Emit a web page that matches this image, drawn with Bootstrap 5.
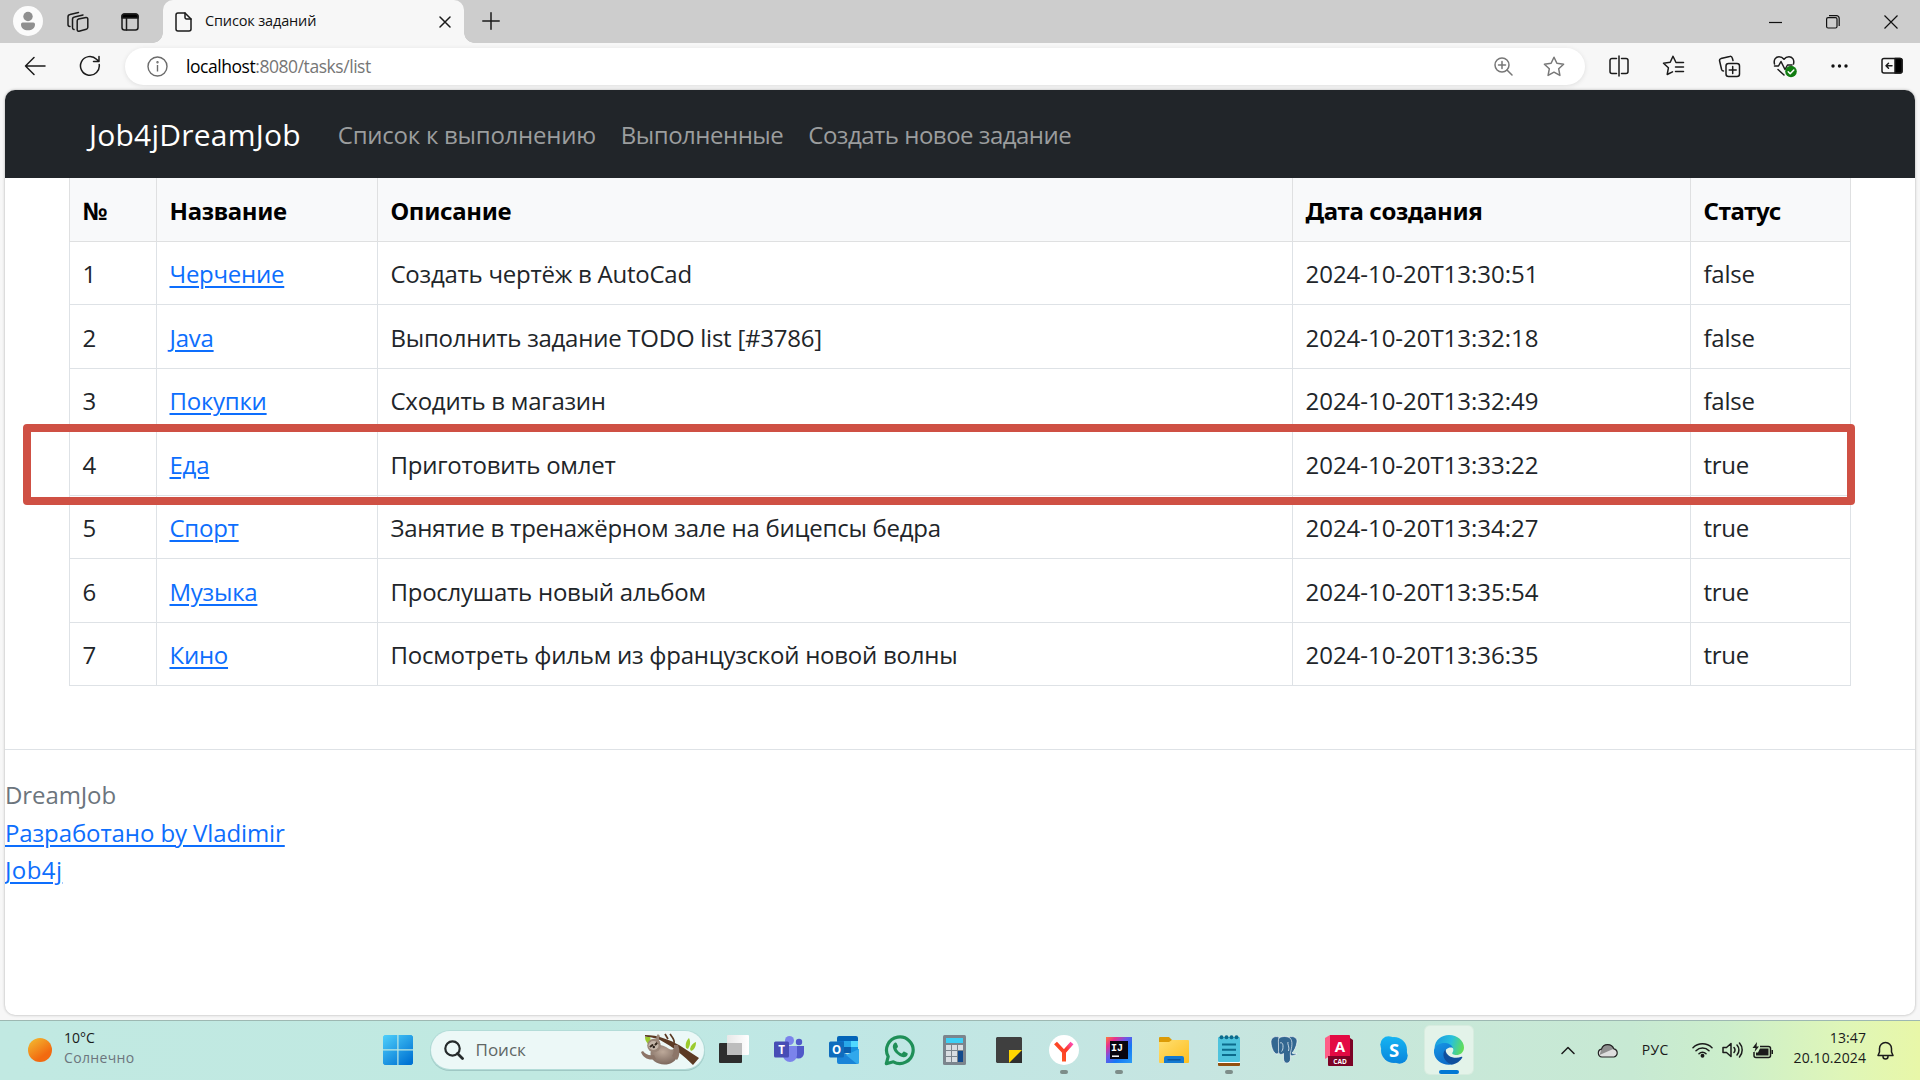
<!DOCTYPE html>
<html lang="ru">
<head>
<meta charset="utf-8">
<meta name="viewport" content="width=device-width, initial-scale=1">
<title>Список заданий</title>
<link href="https://cdn.jsdelivr.net/npm/bootstrap@5.3.0/dist/css/bootstrap.min.css" rel="stylesheet">
<script src="https://cdn.jsdelivr.net/npm/bootstrap@5.3.0/dist/js/bootstrap.bundle.min.js"></script>
<style>
  body { font-family: "Open Sans", "Noto Sans", sans-serif; background: #f7f7f7; color: #212529; }
  svg { display: block; flex: none; }
  .line-icon { fill: none; stroke: #1b1b1b; stroke-width: 1.5; stroke-linecap: round; stroke-linejoin: round; }

  /* browser title bar */
  .title-bar { height: 43px; background: #cdcdcd; padding-left: 13px; }
  .profile-icon { margin-top: -1px; }
  .panel-icon { margin-left: 32px; }
  .browser-tab { width: 301px; background: #f7f7f7; border-radius: 10px 10px 0 0; padding: 0 13px 0 12px; margin-left: 24px; position: relative; }
  .browser-tab::before, .browser-tab::after { content: ""; position: absolute; bottom: 0; width: 10px; height: 10px; }
  .browser-tab::before { left: -10px; background: radial-gradient(circle at 0 0, #cdcdcd 9.5px, #f7f7f7 10px); }
  .browser-tab::after { right: -10px; background: radial-gradient(circle at 100% 0, #cdcdcd 9.5px, #f7f7f7 10px); }
  .tab-title { font-size: 14.5px; letter-spacing: -.15px; color: #111; line-height: 20px; margin-left: 13px; padding-bottom: 1px; }
  .plus-icon { margin: -1px 0 0 18px; }
  .window-keys { gap: 44px; padding-right: 22px; }

  /* address row */
  .address-row { height: 47px; background: #f7f7f7; padding: 0 17px 1px 24px; }
  .reload-icon { margin-left: 33px; }
  .address-pill { width: 1460px; height: 37px; margin-left: 24px; padding: 0 20px 0 22px; background: #fff; border-radius: 19px; box-shadow: 0 1px 5px rgba(0,0,0,.1); }
  .address-text { font-size: 17.5px; letter-spacing: -.45px; color: #767676; margin-left: 18px; line-height: 24px; }
  .zoom-icon, .fav-icon { stroke: #777; }
  .fav-icon { margin-left: 30px; }
  .tool-set { gap: 32px; }

  /* page viewport */
  .page-view { height: 925px; margin: 0 5px; background: #fff; border-radius: 10px; overflow: hidden; box-shadow: 0 0 3px rgba(0,0,0,.3); position: relative; font-size: 24px; line-height: 37.5px; letter-spacing: -.25px; }
  .site-nav { height: 88px; padding: 2px 0 0 84px; }
  .site-nav .navbar-brand { font-size: 30px; letter-spacing: .22px; margin-right: 37px; padding: 0 0 1px; line-height: 46px; }
  .site-nav .nav-link { color: #9b9d9e; padding: 0 !important; letter-spacing: -.25px; margin-right: 25px; }
  .site-nav .nav-item + .nav-item .nav-link { letter-spacing: -.5px; }
  .task-table { width: 1782px; margin: -.6px 0 0 64px; table-layout: fixed; border-color: #dee2e6; --bs-table-color: #212529; }
  .task-table > :not(caption) > * > * { padding: 13.5px 12.5px 11.5px; height: 63.5px; vertical-align: middle; }
  .task-table thead th { font-family: "Noto Sans", sans-serif; font-weight: 700; letter-spacing: -.3px; color: #000; }
  .task-table td:nth-child(4) { letter-spacing: -.03px; }
  .task-table a, .site-footer a { color: #0d6efd; text-decoration-thickness: 2px; text-underline-offset: 3px; }
  .highlight-frame { position: absolute; left: 18px; top: 333.5px; width: 1832px; height: 81px; border: 8px solid #cf5044; border-radius: 4px; }
  .site-footer { margin-top: 62.6px; border-top: 1px solid #dee2e6; padding-top: 26px; letter-spacing: -.1px; }
  .site-footer span { color: #6c757d; }
  .site-footer a:last-child { letter-spacing: .4px; }

  /* taskbar */
  .task-bar { height: 60px; margin-top: 5px; border-top: 1px solid #9db8b2; padding: 0 0 1px 28px; font-size: 14px; line-height: 20px; color: #1a1a1a;
    background: linear-gradient(90deg, #c1e9e2 0, #c0e9e1 28%, #bfe7e5 43%, #c6e5e1 62%, #c8e8d8 76%, #c7e9d3 85%, #cceecb 90%, #dff6b8 96%, #e8f7a8 100%); }
  .weather { width: 354.5px; gap: 12px; }
  .weather-note { letter-spacing: .35px; }
  .search-pill { width: 273px; height: 38px; margin: 0 3px 0 18px; border-radius: 19px; background: #ecf8f7; box-shadow: 0 0 0 1px #b3dcd8, 0 1px 0 1px #9fc8c4; padding: 0 4px 0 13px; font-size: 17px; color: #5f6665; }
  .search-label { margin-left: 12px; }
  .app-slot { width: 55px; height: 48px; position: relative; }
  .app-slot.running::after { content: ""; position: absolute; bottom: 0; left: 23.5px; width: 8px; height: 4px; border-radius: 2px; background: #7d8d89; }
  .app-slot.current { width: 48px; margin-left: 3.5px; background: #e3f3e9; border-radius: 5px; box-shadow: 0 0 0 1px #d7ecdf; }
  .app-slot.current::after { left: 14px; width: 20px; background: #0078d4; }
  .tray { padding-right: 26px; }
  .cloud-icon { margin-left: 22px; }
  .lang-code { margin-left: 23px; letter-spacing: .3px; }
  .wifi-icon { margin-left: 23px; }
  .sound-icon, .power-icon { margin-left: 9px; }
  .clock { letter-spacing: .1px; margin: 0 11px 0 20px; }
</style>
</head>
<body class="vh-100 overflow-hidden d-flex flex-column">

<header>
  <div class="title-bar d-flex align-items-center">
    <svg class="profile-icon" width="30" height="30" viewBox="0 0 30 30"><circle cx="15" cy="15" r="15" fill="#fbfbfb"/><circle cx="15" cy="10.500" r="4.700" fill="#8f8f8f"/><path d="M8 18.200a1.700 1.700 0 0 1 1.700-1.700h10.600a1.700 1.700 0 0 1 1.700 1.700c0 4.200-3 6-7 6s-7-1.800-7-6z" fill="#8f8f8f"/></svg>
    <svg class="line-icon ms-4" width="22" height="22" viewBox="0 0 22 22" stroke-width="1.300"><path d="M11.500 8l7.500-1.500a1.500 1.500 0 0 1 1.800 1.500v8.500a2 2 0 0 1-1.500 1.800L12 20.200a1.500 1.500 0 0 1-1.800-1.500V9.800A2 2 0 0 1 11.500 8zM7 18.500a2 2 0 0 1-1.500-2.200V8.500a2.500 2.500 0 0 1 2-2.500L16 4M3 15.500a2 2 0 0 1-2-2V6a2.500 2.500 0 0 1 2-2.500L11.500 1.500"/></svg>
    <svg class="line-icon panel-icon" width="18" height="18" viewBox="0 0 18 18"><rect x="1" y="1" width="16" height="16" rx="2.500"/><path d="M1 5V3.500A2.500 2.500 0 0 1 3.500 1h11A2.500 2.500 0 0 1 17 3.500V5z" fill="#000"/><path d="M5.500 5v12"/></svg>
    <div class="browser-tab d-flex align-items-center h-100">
      <svg class="line-icon" width="17" height="20" viewBox="0 0 17 20"><path d="M3 1h7l6 6v10a2 2 0 0 1-2 2H3a2 2 0 0 1-2-2V3a2 2 0 0 1 2-2z"/><path d="M10 1v4.500A1.500 1.500 0 0 0 11.500 7H16"/></svg>
      <span class="tab-title">Список заданий</span>
      <svg class="line-icon ms-auto" width="12" height="12" viewBox="0 0 12 12"><path d="M1 1l10 10M11 1L1 11"/></svg>
    </div>
    <svg class="line-icon plus-icon" width="18" height="18" viewBox="0 0 18 18"><path d="M9 .8v16.400M.8 9h16.400"/></svg>
    <div class="window-keys d-flex align-items-center flex-grow-1 justify-content-end">
      <svg width="13" height="14"><path d="M0 7.500h13" stroke="#111" stroke-width="1.200"/></svg>
      <svg width="14" height="14" fill="none" stroke="#111" stroke-width="1.200"><rect x=".6" y="2.600" width="10.400" height="10.400" rx="1.500"/><path d="M3 .7h7.500a2.700 2.700 0 0 1 2.700 2.700V11"/></svg>
      <svg width="14" height="14" stroke="#111" stroke-width="1.200"><path d="M.5.5l13 13M13.500.5l-13 13"/></svg>
    </div>
  </div>

  <div class="address-row d-flex align-items-center">
    <svg class="line-icon" width="22" height="20" viewBox="0 0 22 20"><path d="M21 10H1.500M10 1.500L1.500 10l8.500 8.500"/></svg>
    <svg class="line-icon reload-icon" width="22" height="22" viewBox="0 0 22 22"><path d="M20.200 9.500A9.400 9.400 0 1 1 17.500 4.200L19.500 6M20 1.500V6.500h-5.500"/></svg>
    <div class="address-pill d-flex align-items-center">
      <svg width="21" height="21" viewBox="0 0 21 21" fill="none" stroke="#6b6b6b" stroke-width="1.400"><circle cx="10.500" cy="10.500" r="9.500"/><path d="M10.500 9v6.500"/><circle cx="10.500" cy="6.300" r=".5"/></svg>
      <span class="address-text"><span class="text-black">localhost</span>:8080/tasks/list</span>
      <svg class="line-icon zoom-icon ms-auto" width="19" height="19" viewBox="0 0 19 19"><circle cx="8" cy="8" r="7"/><path d="M13 13l5 5M8 4.500v7M4.500 8h7"/></svg>
      <svg class="line-icon fav-icon" width="22" height="21" viewBox="0 0 22 21"><path d="M11 1.200l2.900 6.100 6.700.9-4.900 4.600 1.200 6.600L11 16.200l-5.900 3.200 1.200-6.600L1.400 8.200l6.700-.9z"/></svg>
    </div>
    <div class="tool-set d-flex align-items-center ms-auto">
      <svg class="line-icon" width="22" height="22" viewBox="0 0 22 22"><path d="M8.500 3.500H4a2 2 0 0 0-2 2v11a2 2 0 0 0 2 2h4.500M13.500 3.500H18a2 2 0 0 1 2 2v11a2 2 0 0 1-2 2h-4.500M11 1v20"/></svg>
      <svg class="line-icon" width="24" height="22" viewBox="0 0 24 22"><path d="M14 7.500L11 1.200 8.200 7.300l-6.700.9 4.900 4.600-1.200 6.700 5.300-2.700M15 7.500h6.500M13.500 12h8M13.500 16.500h8"/></svg>
      <svg class="line-icon" width="23" height="23" viewBox="0 0 23 23"><rect x="8" y="8.500" width="13.500" height="13" rx="2.500"/><path d="M14.700 11.500v7M11.200 15h7M15 5.500l-.8-2.700A2 2 0 0 0 11.700 1.400L3 3.600A2 2 0 0 0 1.600 6l2 8.500c.3 1 .9 1.600 1.900 1.600"/></svg>
      <svg class="line-icon" width="24" height="23" viewBox="0 0 24 23"><path d="M1.500 9C.3 4.500 3 1.700 6 1.700c2 0 3.600.8 5 2.600 1.400-1.800 3-2.600 5-2.600 3 0 5.700 2.800 4.500 7.300M1.500 11h4L8 6.500l4 8L14.500 10H19M5 14.500l6 5.500"/><circle cx="18" cy="16.500" r="5.800" fill="#107c10" stroke="none"/><path d="M15.200 16.800l2 2 3.600-3.800" stroke="#fff"/></svg>
      <svg width="20" height="6" fill="#111"><circle cx="4" cy="3" r="1.700"/><circle cx="10.500" cy="3" r="1.700"/><circle cx="17" cy="3" r="1.700"/></svg>
      <svg class="line-icon" width="22" height="18" viewBox="0 0 22 18"><rect x="1" y="1.500" width="20" height="14.500" rx="2"/><path d="M14 1.500h5a2 2 0 0 1 2 2v10.500a2 2 0 0 1-2 2h-5z" fill="#000"/><path d="M11 8.800H5M7.500 6.300L5 8.800l2.500 2.500"/></svg>
    </div>
  </div>
</header>

<main class="page-view">
  <nav class="site-nav navbar navbar-expand navbar-dark bg-dark">
    <a class="navbar-brand" href="#">Job4jDreamJob</a>
    <ul class="navbar-nav">
      <li class="nav-item"><a class="nav-link" href="#">Список к выполнению</a></li>
      <li class="nav-item"><a class="nav-link" href="#">Выполненные</a></li>
      <li class="nav-item"><a class="nav-link" href="#">Создать новое задание</a></li>
    </ul>
  </nav>

  <table class="task-table table table-bordered">
    <colgroup><col style="width:87px"><col style="width:221px"><col style="width:915px"><col style="width:398px"><col style="width:160px"></colgroup>
    <thead class="table-light"><tr><th>№</th><th>Название</th><th>Описание</th><th>Дата создания</th><th>Статус</th></tr></thead>
    <tbody>
      <tr><td>1</td><td><a href="#">Черчение</a></td><td>Создать чертёж в AutoCad</td><td>2024-10-20T13:30:51</td><td>false</td></tr>
      <tr><td>2</td><td><a href="#">Java</a></td><td>Выполнить задание TODO list [#3786]</td><td>2024-10-20T13:32:18</td><td>false</td></tr>
      <tr><td>3</td><td><a href="#">Покупки</a></td><td>Сходить в магазин</td><td>2024-10-20T13:32:49</td><td>false</td></tr>
      <tr><td>4</td><td><a href="#">Еда</a></td><td>Приготовить омлет</td><td>2024-10-20T13:33:22</td><td>true</td></tr>
      <tr><td>5</td><td><a href="#">Спорт</a></td><td>Занятие в тренажёрном зале на бицепсы бедра</td><td>2024-10-20T13:34:27</td><td>true</td></tr>
      <tr><td>6</td><td><a href="#">Музыка</a></td><td>Прослушать новый альбом</td><td>2024-10-20T13:35:54</td><td>true</td></tr>
      <tr><td>7</td><td><a href="#">Кино</a></td><td>Посмотреть фильм из французской новой волны</td><td>2024-10-20T13:36:35</td><td>true</td></tr>
    </tbody>
  </table>
  <div class="highlight-frame"></div>

  <footer class="site-footer d-flex flex-column align-items-start">
    <span>DreamJob</span>
    <a href="#">Разработано by Vladimir</a>
    <a href="#">Job4j</a>
  </footer>
</main>

<div class="task-bar d-flex align-items-center">
  <div class="weather d-flex align-items-center">
    <svg width="24" height="24"><defs><linearGradient id="sun" x1="0" y1="0" x2=".7" y2="1"><stop offset="0" stop-color="#f3c033"/><stop offset=".8" stop-color="#f26a10"/></linearGradient></defs><circle cx="12" cy="12" r="12" fill="url(#sun)"/></svg>
    <div class="pb-1"><div>10°C</div><div class="weather-note text-secondary">Солнечно</div></div>
  </div>
  <svg width="30" height="30"><defs><linearGradient id="win" gradientUnits="userSpaceOnUse" x1="0" y1="0" x2="24" y2="30"><stop offset="0" stop-color="#4fd0fb"/><stop offset="1" stop-color="#0073d3"/></linearGradient></defs><path d="M1.500 0H14.300V14.300H0V1.500zM15.500 0H28.500L30 1.500V14.300H15.500zM0 15.500H14.300V30H1.500L0 28.500zM15.500 15.500H30V28.500L28.500 30H15.500z" fill="url(#win)"/></svg>
  <div class="search-pill d-flex align-items-center">
    <svg width="20" height="20" fill="none" stroke="#252a2b" stroke-width="2.200"><circle cx="8.500" cy="8.500" r="7.200"/><path d="M13.500 13.500l5 5" stroke-width="2.800" stroke-linecap="round"/></svg>
    <span class="search-label">Поиск</span>
    <svg class="ms-auto" width="60" height="34" viewBox="0 0 60 34">
      <defs><radialGradient id="fur" cx=".45" cy=".35" r=".75"><stop offset="0" stop-color="#bda99a"/><stop offset="1" stop-color="#735f55"/></radialGradient></defs>
      <path d="M5 2c13 0 25 5 34 10l20 13-6 7C44 23 33 14 20 7 14 4.500 9 4 5 3.500z" fill="#5b3a24"/>
      <path d="M34 10c1-3-1-5-4-9M28 6l-3-5" stroke="#5b3a24" stroke-width="1.700" fill="none"/>
      <path d="M5 4c0 4 2 5 3 7 3-2 3-4 2-7zM46 15c-1-5 1-8 3-10 2 4 1 8-1 11zM50 16c1-4 3-6 6-7 0 5-2 8-5 9z" fill="#9bcb2d"/>
      <path d="M36 12c3 6 2 14-3 17-6 4-14 3-19-1C8 22 10 14 18 12c8-1 13 8 16 3z" fill="url(#fur)"/>
      <path d="M38 12c2 5 2 11-1 15l-5-4c2-3 2-7 2-11zM14 22c-5 1-9-1-11-4l-2 1c2 6 8 9 15 7z" fill="#8c7568"/>
      <circle cx="14" cy="12.500" r="6.800" fill="#9a8679"/><ellipse cx="13.500" cy="12.500" rx="5" ry="4.400" fill="#c4b5a8"/>
      <path d="M10.500 13.500l2-1.500M15.500 11.500l2-2" stroke="#35291f" stroke-width="2" stroke-linecap="round"/><circle cx="13.800" cy="14" r="1.200" fill="#241c18"/>
      <path d="M19 10c-2-2-2-6 0-8" stroke="#9a8679" stroke-width="3" fill="none"/>
    </svg>
  </div>

  <div class="app-slot d-flex align-items-center justify-content-center">
    <svg width="30" height="30"><defs><linearGradient id="tvw" x1="0" x2="1"><stop offset="0" stop-color="#e8e8e8"/><stop offset="1" stop-color="#fff"/></linearGradient></defs><rect y="8" width="23" height="20" rx="1" fill="#2d2d2d"/><rect x="8" y="0" width="22" height="20" rx="1" fill="url(#tvw)"/><rect x="8" y="8" width="15" height="12" fill="#bdbdbd"/></svg>
  </div>
  <div class="app-slot d-flex align-items-center justify-content-center">
    <svg width="30" height="30"><circle cx="25" cy="7" r="3.200" fill="#5059c9"/><path d="M19 11h11v7a5.500 5.500 0 0 1-11 0z" fill="#5059c9"/><circle cx="15.500" cy="5.500" r="4.500" fill="#7b83eb"/><path d="M9 11h14v9a7 7 0 0 1-14 0z" fill="#7b83eb"/><rect y="6.500" width="15" height="16" rx="1.500" fill="#474db5"/><text x="7.500" y="18.500" text-anchor="middle" font-size="11.500" font-weight="700" fill="#fff">T</text></svg>
  </div>
  <div class="app-slot d-flex align-items-center justify-content-center">
    <svg width="30" height="30"><path d="M8 3a2 2 0 0 1 2-2h17a2 2 0 0 1 2 2v15H8z" fill="#0364b8"/><path d="M8 6h7v6H8z" fill="#0f78d4"/><path d="M15 6h7v6h-7z" fill="#28a8ea"/><path d="M22 6h7v6h-7z" fill="#50d9ff"/><path d="M8 12h14v6H8z" fill="#0a5fae"/><path d="M22 12h7v6h-7z" fill="#1490df"/><path d="M8 14l11 6 11-6v13a2 2 0 0 1-2 2H10a2 2 0 0 1-2-2z" fill="#1a84d8"/><path d="M30 14v13a2 2 0 0 1-2 2L17 20z" fill="#31a8ec"/><rect y="6.500" width="15" height="16" rx="1.500" fill="#0f6cbd"/><text x="7.500" y="18.500" text-anchor="middle" font-size="11.500" font-weight="700" fill="#fff">O</text></svg>
  </div>
  <div class="app-slot d-flex align-items-center justify-content-center">
    <svg width="31" height="31" viewBox="0 0 31 31"><path d="M2.300 28.700L4.200 21.600A13.300 13.300 0 1 1 9.400 26.800z" fill="none" stroke="#1f8f58" stroke-width="3.200" stroke-linejoin="round"/><path d="M10.500 8c.8-.6 1.800-.5 2.200.3l1.200 2.700c.2.500 0 1-.4 1.500l-1 1.200c1.200 2.300 2.900 3.900 5.300 4.900l1.400-1.600c.4-.5.8-.5 1.300-.3l2.600 1.300c.6.300.7.700.6 1.300-.4 2-2.400 3.100-4.300 2.900-5-.7-9.800-5.500-10.500-9.600-.3-1.800.4-3.700 1.600-4.600z" fill="#1f8f58"/></svg>
  </div>
  <div class="app-slot d-flex align-items-center justify-content-center">
    <svg width="23" height="30"><rect width="23" height="30" rx="1.500" fill="#7b858d"/><rect x="3" y="3" width="17" height="5" fill="#3dd0f5"/><g fill="#d9dee2"><path d="M3 10h5v5H3zM9 10h5v5H9zM15 10h5v5h-5zM3 16h5v5H3zM9 16h5v5H9zM3 22h5v5H3zM9 22h5v5H9z"/></g><path d="M15 16h5v11h-5z" fill="#124a8c"/></svg>
  </div>
  <div class="app-slot d-flex align-items-center justify-content-center">
    <svg width="26" height="26"><path d="M1 0h24l1 1v12L13 26H1l-1-1V1z" fill="#3f3f3f"/><path d="M13 13h13v13H13z" fill="#2e2e2e"/><path d="M13 13h13L13 26z" fill="#ffd500"/></svg>
  </div>
  <div class="app-slot running d-flex align-items-center justify-content-center">
    <svg width="30" height="30"><defs><linearGradient id="ya" gradientUnits="userSpaceOnUse" x1="6" y1="20" x2="24" y2="6"><stop offset="0" stop-color="#ff5a1f"/><stop offset=".55" stop-color="#fb3b2b"/><stop offset="1" stop-color="#ff4fd8"/></linearGradient></defs><circle cx="15" cy="15" r="15" fill="#fff"/><path d="M6.500 8l8.500 9 8-9M15 16v10.500" fill="none" stroke="url(#ya)" stroke-width="4" stroke-linejoin="round"/></svg>
  </div>
  <div class="app-slot running d-flex align-items-center justify-content-center">
    <svg width="26" height="26"><defs><linearGradient id="ij" x1="0" y1="0" x2="1" y2="1"><stop offset="0" stop-color="#fe7a3b"/><stop offset=".2" stop-color="#e8318c"/><stop offset=".42" stop-color="#6b57e8"/><stop offset=".65" stop-color="#1578f5"/><stop offset="1" stop-color="#2b9cf5"/></linearGradient></defs><rect width="26" height="26" fill="url(#ij)"/><rect x="4" y="4" width="18" height="18" fill="#080510"/><text x="5" y="13.500" font-family="Liberation Mono, monospace" font-size="10" font-weight="700" fill="#fff">IJ</text><path d="M6 19.200h7" stroke="#fff" stroke-width="1.500"/></svg>
  </div>
  <div class="app-slot d-flex align-items-center justify-content-center">
    <svg width="30" height="28"><defs><linearGradient id="fold" x1="0" y1="0" x2="1" y2="1"><stop offset="0" stop-color="#ffdf72"/><stop offset="1" stop-color="#fdbe1e"/></linearGradient></defs><path d="M0 2a1 1 0 0 1 1-1h9l3 3-2 5H0z" fill="#dc9b07"/><path d="M0 6h10l3-2h16a1 1 0 0 1 1 1v21a1 1 0 0 1-1 1H1a1 1 0 0 1-1-1z" fill="url(#fold)"/><path d="M5 27v-5a2 2 0 0 1 2-2h16a2 2 0 0 1 2 2v5z" fill="#1379d1"/><path d="M8.500 23.800h13" stroke="#0a4e94" stroke-width="1.300"/></svg>
  </div>
  <div class="app-slot running d-flex align-items-center justify-content-center">
    <svg width="24" height="31"><path d="M1 27h22v3a1 1 0 0 1-1 1H2a1 1 0 0 1-1-1z" fill="#93500f"/><path d="M1 26h22v2H1z" fill="#fff"/><rect x="1" y="2" width="22" height="25" rx="1" fill="#4fc3dd"/><g fill="#0c6b8c"><circle cx="4.500" cy="2.300" r="2"/><circle cx="9.500" cy="2.300" r="2"/><circle cx="14.500" cy="2.300" r="2"/><circle cx="19.500" cy="2.300" r="2"/></g><path d="M5 9.500h14M5 14.800h14M5 20h14" stroke="#0c6b8c" stroke-width="2"/></svg>
  </div>
  <div class="app-slot d-flex align-items-center justify-content-center">
    <svg width="28" height="30" viewBox="0 0 28 30"><g fill="#336791" stroke="#fff" stroke-opacity=".8" stroke-width=".8"><path d="M9 2C4 .5.500 3 1 8c.4 5 3 11 6 11 1.500 0 2-2 3-3z"/><path d="M19 2c5-1.500 8.500 1 8 5-.6 5-3 9-5 11 1.500 1 3.500 1 5 .6-1.500 2-4.500 2.600-6.500 1.900L17 15z"/><path d="M9 3c3-2 8-2 11 0 3 3 2 9 .3 15l.2 6c-.2 5-6.500 6-7 0V18.500c-3 2-5 .5-5-2V10c0-3-.5-5 .5-7z"/></g><path d="M10 8c2-1 3 1 3 3s0 4-1.500 5.500M18 7c-1 2 2 5 .5 9" fill="none" stroke="#e6f1f5" stroke-width=".8"/></svg>
  </div>
  <div class="app-slot d-flex align-items-center justify-content-center">
    <svg width="28" height="31"><path d="M0 3l5-3v21l-5 3z" fill="#ff5d87"/><path d="M5 0h19a1 1 0 0 1 1 1v20H5z" fill="#e30a43"/><path d="M25 3l3 2v26h-3z" fill="#7c0326"/><path d="M3 21h24v9a1 1 0 0 1-1 1H4a1 1 0 0 1-1-1z" fill="#7c0326"/><text x="15" y="17" text-anchor="middle" font-size="15" font-weight="700" fill="#fff">A</text><text x="15" y="28.500" text-anchor="middle" font-size="6.500" font-weight="700" fill="#fff">CAD</text></svg>
  </div>
  <div class="app-slot d-flex align-items-center justify-content-center">
    <svg width="28" height="28"><defs><linearGradient id="sk" gradientUnits="userSpaceOnUse" x1="0" y1="0" x2="0" y2="28"><stop offset="0" stop-color="#16b5f2"/><stop offset="1" stop-color="#0884dc"/></linearGradient></defs><g fill="url(#sk)"><circle cx="8.500" cy="8.500" r="8.200"/><circle cx="19.500" cy="19.500" r="8.200"/><circle cx="14" cy="14" r="13"/></g><text x="14" y="20.500" text-anchor="middle" font-size="18.500" font-weight="700" fill="#fff">S</text></svg>
  </div>
  <div class="app-slot running current d-flex align-items-center justify-content-center">
    <svg width="30" height="30" viewBox="0 0 30 30"><defs><linearGradient id="eg1" x1="0" y1=".3" x2="1" y2=".5"><stop offset="0" stop-color="#1a9be0"/><stop offset=".55" stop-color="#28c0dc"/><stop offset="1" stop-color="#62de57"/></linearGradient><linearGradient id="eg2" x1="0" y1="0" x2=".5" y2="1"><stop offset="0" stop-color="#1797e6"/><stop offset="1" stop-color="#0d6cc8"/></linearGradient></defs><path d="M.5 13C1 5 7.500 0 15 0c8.500 0 15 6 15 12.500 0 5-4 7.500-7.500 7.500-3 0-5-1-4-2.500 1-1.300 1-3 .5-4C17.500 9.500 6 7 .5 13z" fill="url(#eg1)"/><path d="M0 15C1 10 6 8 10.500 8c4 0 7.500 2 8.500 5-4-1.500-8 1-8 5 0 6 5 10 9 11C9 32-1 25 0 15z" fill="url(#eg2)"/><path d="M11.500 14.500C7 19 10 27 17.500 29.500c5-.5 9-3.500 10.800-7 .3-.7-.2-1-.8-.7C21 24.500 12 22 11.500 14.500z" fill="#0f4f9e"/></svg>
  </div>

  <div class="tray d-flex align-items-center ms-auto">
    <svg class="line-icon" width="14" height="9" viewBox="0 0 14 9"><path d="M1 7.500l6-6 6 6"/></svg>
    <svg class="cloud-icon" width="22" height="15" viewBox="0 0 22 15"><path d="M5 14a4 4 0 0 1-.5-7.900A6.500 6.500 0 0 1 16.800 5.800 4.200 4.200 0 0 1 17 14z" fill="#dedede"/><path d="M4.500 6.100A6.500 6.500 0 0 1 16.800 5.800L2.500 12z" fill="#8f8f8f"/><path d="M5 14a4 4 0 0 1-.5-7.900A6.500 6.500 0 0 1 16.800 5.800 4.200 4.200 0 0 1 17 14z" fill="none" stroke="#222" stroke-width="1.200"/></svg>
    <span class="lang-code">РУС</span>
    <svg class="line-icon wifi-icon" width="21" height="16" viewBox="0 0 21 16"><path d="M1 5.700a13.500 13.500 0 0 1 19 0M4 8.800a9.200 9.200 0 0 1 13 0M7 11.800a5 5 0 0 1 7 0"/><circle cx="10.500" cy="13.800" r="1.200" fill="#1b1b1b"/></svg>
    <svg class="line-icon sound-icon" width="21" height="16" viewBox="0 0 21 16"><path d="M1 5.500h3.500L9 1.500v13l-4.500-4H1z"/><path d="M12 5.500a4 4 0 0 1 0 5M15 3a7.500 7.500 0 0 1 0 10M17.500 1a10.500 10.500 0 0 1 0 14"/></svg>
    <svg class="power-icon" width="22" height="17" viewBox="0 0 22 17"><path d="M8 4.500h8.500a2 2 0 0 1 2 2v7a2 2 0 0 1-2 2H4a2 2 0 0 1-2-2V10" fill="none" stroke="#1b1b1b" stroke-width="1.500"/><path d="M8 6.500h8.500v7H4V10.500h2zM19.500 8h1.500v4h-1.500zM5 0L.5 6H3.500L2.500 10 7 4.500H4.500z" fill="#1b1b1b"/></svg>
    <div class="clock text-end pb-1"><div>13:47</div><div>20.10.2024</div></div>
    <svg class="line-icon" width="17" height="19" viewBox="0 0 17 19"><path d="M1 14.500l1.500-3.500V7.500a6 6 0 0 1 12 0V11l1.500 3.500zM6 15.500a2.500 2.500 0 0 0 5 0"/></svg>
  </div>
</div>
</body>
</html>
